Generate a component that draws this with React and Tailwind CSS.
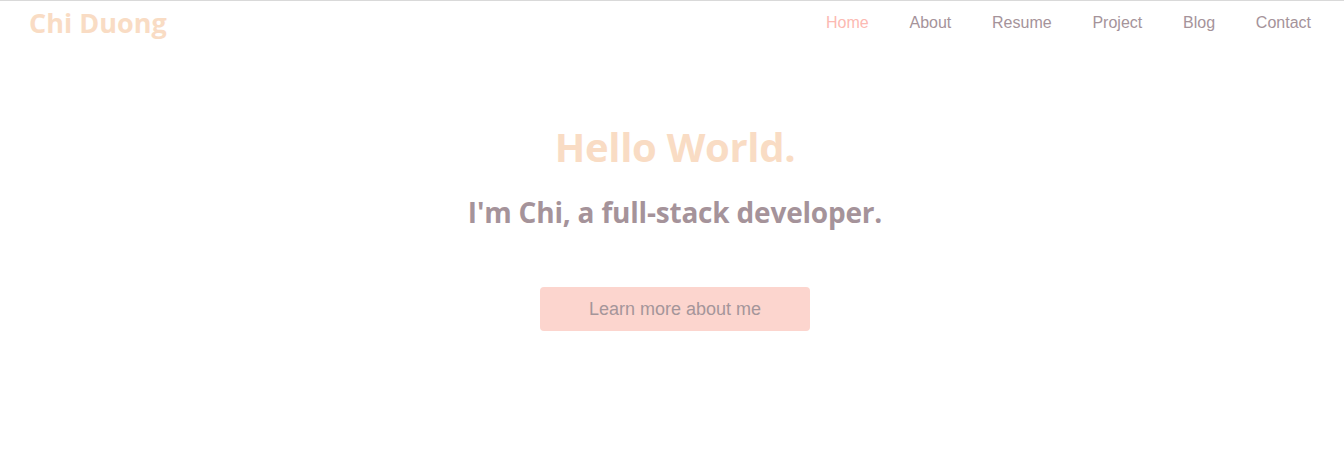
import React from "react";

const links = ["Home", "About", "Resume", "Project", "Blog", "Contact"];

export default function App() {
  return (
    <div className="min-h-[468px] bg-white border-t border-[#d9d9d9]">
      <header className="flex items-center justify-between h-[43px] pl-[29px] pr-[33px]">
        <a className="text-[27px] font-bold text-[#f9dcc4] font-['Open_Sans',sans-serif] leading-none">
          Chi Duong
        </a>
        <nav className="flex gap-[40.8px] font-['Liberation_Sans',Arial,sans-serif] text-[16px]">
          {links.map((l, i) => (
            <a key={l} className={i === 0 ? "text-[#fcb9b2]" : "text-[#a5939a]"}>
              {l}
            </a>
          ))}
        </nav>
      </header>
      <main className="flex flex-col items-center pt-[83px] pl-[6px]">
        <h1 className="text-[40px] font-bold text-[#f9dcc4] font-['Open_Sans',sans-serif] leading-none tracking-[-0.3px]">
          Hello World.
        </h1>
        <h2 className="mt-[31px] text-[28px] font-bold text-[#a5939a] font-['Open_Sans',sans-serif] leading-none tracking-[-0.2px]">
          I'm Chi, a full-stack developer.
        </h2>
        <button className="mt-[61px] w-[270px] h-[44px] rounded-[4px] bg-[#fcd5ce] text-[#a5959a] text-[18px] font-['Liberation_Sans',Arial,sans-serif]">
          Learn more about me
        </button>
      </main>
    </div>
  );
}
